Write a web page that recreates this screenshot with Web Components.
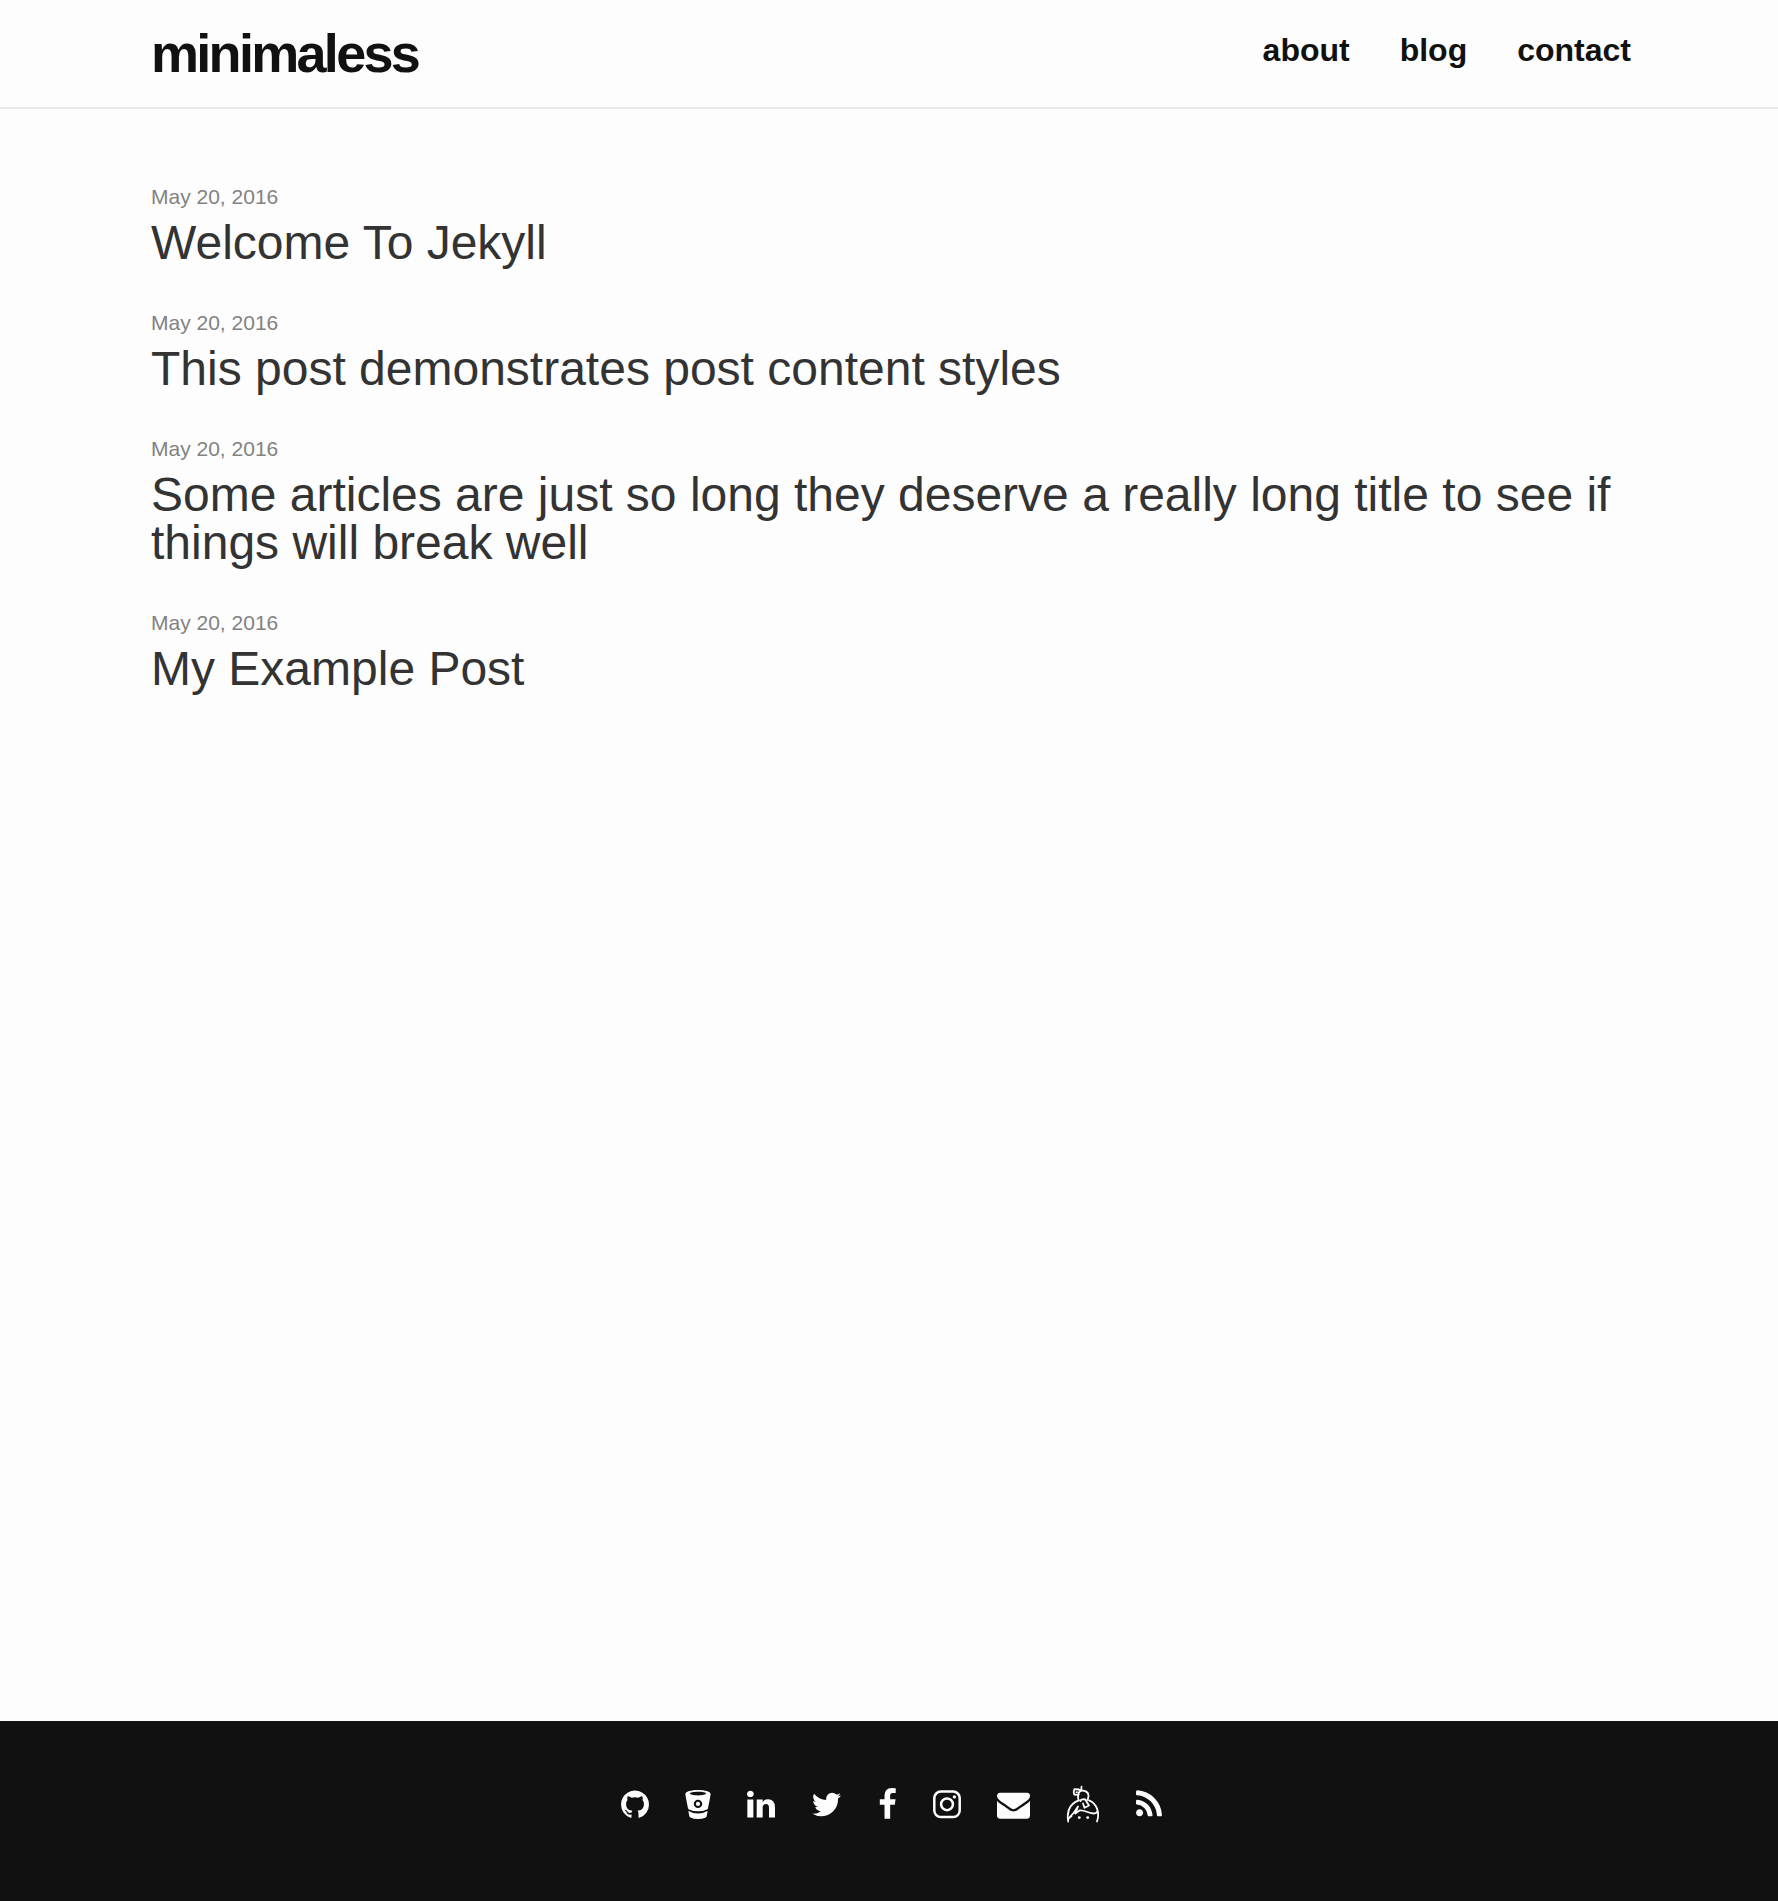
<!DOCTYPE html>
<html lang="en">
<head>
<meta charset="utf-8">
<meta name="viewport" content="width=device-width, initial-scale=1">
<title>minimaless</title>
<style>
  body { margin: 0; background: #fdfdfd; font-family: "Liberation Sans", Arial, sans-serif; color: #333; }
</style>
</head>
<body>
<site-page>
  <site-header slot="header">
    <site-logo href="#home">minimaless</site-logo>
    <nav-link slot="nav" href="#about">about</nav-link>
    <nav-link slot="nav" href="#blog">blog</nav-link>
    <nav-link slot="nav" href="#contact">contact</nav-link>
  </site-header>
  <post-item date="May 20, 2016" href="#welcome">Welcome To Jekyll</post-item>
  <post-item date="May 20, 2016" href="#styles">This post demonstrates post content styles</post-item>
  <post-item date="May 20, 2016" href="#long">Some articles are just so long they deserve a really long title to see if things will break well</post-item>
  <post-item date="May 20, 2016" href="#example">My Example Post</post-item>
  <site-footer slot="footer">
    <social-link name="github"></social-link>
    <social-link name="bitbucket"></social-link>
    <social-link name="linkedin"></social-link>
    <social-link name="twitter"></social-link>
    <social-link name="facebook"></social-link>
    <social-link name="instagram"></social-link>
    <social-link name="email"></social-link>
    <social-link name="keybase"></social-link>
    <social-link name="rss"></social-link>
  </site-footer>
</site-page>
<script>
class Base extends HTMLElement {
  connectedCallback() {
    if (!this.shadowRoot) this.attachShadow({ mode: 'open' }).innerHTML = this.render();
  }
}

customElements.define('site-page', class extends Base {
  render() {
    return `<style>
      :host { display: flex; flex-direction: column; min-height: 100vh; }
      main { flex: 1; display: flex; flex-direction: column; gap: 44px; padding: 76px 147px 64px 151px; }
    </style>
    <slot name="header"></slot><main><slot></slot></main><slot name="footer"></slot>`;
  }
});

customElements.define('site-header', class extends Base {
  render() {
    return `<style>
      :host { display: block; border-bottom: 2px solid #e8e8e8; }
      header { display: flex; justify-content: space-between; align-items: flex-start; padding: 23px 147px 24px 151px; }
      nav { display: flex; gap: 50px; padding-top: 9px; }
    </style>
    <header><slot></slot><nav><slot name="nav"></slot></nav></header>`;
  }
});

customElements.define('site-logo', class extends Base {
  render() {
    return `<style>
      :host { display: block; }
      a { display: block; color: #111; font-size: 54px; line-height: 60px; font-weight: 700; letter-spacing: -0.05em; text-decoration: none; }
    </style>
    <a href="${this.getAttribute('href')}"><slot></slot></a>`;
  }
});

customElements.define('nav-link', class extends Base {
  render() {
    return `<style>
      :host { display: block; }
      a { display: block; color: #111; font-size: 32px; line-height: 36px; font-weight: 700; text-decoration: none; }
    </style>
    <a href="${this.getAttribute('href')}"><slot></slot></a>`;
  }
});

customElements.define('post-item', class extends Base {
  render() {
    return `<style>
      :host { display: block; }
      time { display: block; color: #828282; font-size: 21px; line-height: 24px; margin-bottom: 10px; }
      h2 { margin: 0; font-size: 48px; line-height: 48px; font-weight: 400; }
      a { color: #333; text-decoration: none; }
    </style>
    <article><time datetime="2016-05-20">${this.getAttribute('date')}</time>
    <h2><a href="${this.getAttribute('href')}"><slot></slot></a></h2></article>`;
  }
});

customElements.define('site-footer', class extends Base {
  render() {
    return `<style>
      :host { display: block; background: #111; }
      footer { display: flex; justify-content: center; align-items: center; gap: 36px; padding: 67px 147px 80px 151px; }
    </style>
    <footer><slot></slot></footer>`;
  }
});

// Each icon: width in pixels, viewBox, shapes. All are 33px tall.
const ICONS = {
  github: [28, '128 0 1536 1792', '<path d="M1664 896q0 251-146.5 451.5t-378.5 277.5q-27 5-39.5-7t-12.5-30v-211q0-97-52-142 57-6 102.5-18t94-39 81-66.5 53-105 20.5-150.5q0-121-79-206 37-91-8-204-28-9-81 11t-92 44l-38 24q-93-26-192-26t-192 26q-16-11-42.5-27t-83.5-38.5-86-13.5q-44 113-7 204-79 85-79 206 0 85 20.5 150t52.5 105 80.5 67 94 39 102.5 18q-40 36-49 103-21 10-45 15t-57 5-65.5-21.5-55.5-62.5q-19-32-48.5-52t-49.5-24l-20-3q-21 0-29 4.5t-5 11.5 9 14 13 12l7 5q22 10 43.5 38t31.5 51l10 23q13 38 44 61.5t67 30 69.5 7 55.5-3.5l23-4q0 38 .5 89t.5 54q0 18-13 30t-40 7q-232-77-378.5-277.5t-146.5-451.5q0-209 103-385.5t279.5-279.5 385.5-103 385.5 103 279.5 279.5 103 385.5z"/>'],
  bitbucket: [26, '0 0 26 33', '<path fill-rule="evenodd" d="M13 2C6 2 .4 3.600.4 6C.4 7.500 2.500 17.500 3 20.200Q3.200 21 4 21.400Q8 23.300 13 23.300T22 21.400Q22.800 21 23 20.200C23.500 17.500 25.600 7.500 25.600 6C25.600 3.600 20 2 13 2ZM13 3.800C17.500 3.800 21 4.500 21 5.600S17.500 7.400 13 7.400S5 6.700 5 5.600S8.500 3.800 13 3.800ZM13 11.700A4.200 4.200 0 1 1 13 20.100A4.200 4.200 0 1 1 13 11.700Z"/><circle cx="13" cy="15.900" r="2.100"/><path d="M3.700 22.900Q8 25.400 13 25.400T22.300 22.900Q22.700 23 22.600 23.400L21.700 28Q21.500 29 20.600 29.500Q17.500 31 13 31T5.400 29.500Q4.500 29 4.300 28L3.400 23.400Q3.400 23 3.700 22.900Z"/>'],
  linkedin: [28, '128 0 1536 1792', '<path d="M477 625v991h-330v-991h330zm21-306q1 73-50.500 122t-135.500 49h-2q-82 0-132-49t-50-122q0-74 51.500-122.500t134.500-48.500 133 48.500 51 122.500zm1166 729v568h-329v-530q0-105-40.500-164.500t-126.500-59.500q-63 0-105.500 34.500t-63.500 85.500q-11 30-11 81v553h-329q2-399 2-647t-1-296l-1-48h329v144h-2q20-32 41-56t56.500-52 87-43.500 114.500-15.500q171 0 275 113.500t104 332.500z"/>'],
  twitter: [31, '64 0 1664 1792', '<path d="M1684 408q-67 98-162 167 1 14 1 42 0 130-38 259.500t-115.500 248.500-184.500 210.500-258 146-323 54.500q-271 0-496-145 35 4 78 4 225 0 401-138-105-2-188-64.500t-114-159.500q33 5 61 5 43 0 85-11-112-23-185.500-111.500t-73.500-205.500v-4q68 38 146 41-66-44-105-115t-39-154q0-88 44-163 121 149 294.500 238.500t371.500 99.500q-8-38-8-74 0-134 94.500-228.500t228.500-94.500q140 0 236 102 109-21 205-78-37 115-142 178 93-10 186-50z"/>'],
  facebook: [19, '384 0 1024 1792', '<path d="M1343 12v264h-157q-86 0-116 36t-30 108v189h293l-39 296h-254v759h-306v-759h-255v-296h255v-218q0-186 104-288.500t277-102.500q147 0 228 12z"/>'],
  instagram: [28, '0 0 28 33', '<rect x="1.300" y="3.600" width="25.400" height="25.400" rx="6.500" fill="none" stroke="#fdfdfd" stroke-width="2.500"/><circle cx="14" cy="16.300" r="5.900" fill="none" stroke="#fdfdfd" stroke-width="2.500"/><circle cx="21.400" cy="8.900" r="1.700"/>'],
  email: [33, '0 0 1792 1792', '<path d="M1792 710v794q0 66-47 113t-113 47h-1472q-66 0-113-47t-47-113v-794q44 49 101 87 362 246 497 345 57 42 92.500 65.500t94.500 48 110 24.500h2q51 0 110-24.500t94.500-48 92.500-65.500q170-123 498-345 57-39 100-87zm0-294q0 79-49 151t-122 123q-376 261-468 325-10 7-42.500 30.500t-54 38-52 32.500-57.500 27-50 9h-2q-23 0-50-9t-57.500-27-52-32.500-54-38-42.500-30.500q-91-64-262-182.500t-205-142.500q-62-42-117-115.500t-55-136.500q0-78 41.500-130t118.500-52h1472q65 0 112.500 47t47.500 113z"/>'],
  keybase: [34, '0 0 34 33', '<g fill="none" stroke="#fdfdfd" stroke-width="1.800" stroke-linejoin="round" stroke-linecap="round"><path d="M2.200 33.500C1 27 1.500 16 13 12.300M23 12.300C31 15.500 34 25 31 33.500"/><path d="M12.600 11.800C11.500 9.500 12 5 14 3.300C18 1.300 22.500 4 22.500 7.500Q22.500 10 21.300 12M12.500 1.500L15.300 2.300L15.500-1.300"/><path d="M12.600 6.800L8.200 6.500Q7.200 4 8.400 1.200L12.500 1.500"/><path d="M14.500 13Q14.800 11.300 16.700 11.400L19 11.200L23 17.500L18.500 19.800L17 15.500"/><path d="M2 31L8 24.500L12 18.500L9.300 25.500L13.500 22.500C19 22 23 25.500 28 25.500Q30.500 25.500 31.200 23.500M2 31L5.500 28"/><path d="M10.600 4.200h.4"/></g><circle cx="13.300" cy="29.600" r="1.400"/><circle cx="21.700" cy="29.600" r="1.400"/>'],
  rss: [26, '192 0 1408 1792', '<path d="M576 1344q0 80-56 136t-136 56-136-56-56-136 56-136 136-56 136 56 56 136zm512 123q2 28-17 48-18 21-47 21h-135q-25 0-43-16.500t-20-41.500q-22-229-184.500-391.500t-391.500-184.500q-25-2-41.500-20t-16.500-43v-135q0-29 21-47 17-17 43-17h5q160 13 306 80.500t259 181.500q114 113 181.500 259t80.500 306zm512 2q2 27-18 47-18 20-46 20h-143q-26 0-44.500-17.500t-19.500-42.500q-12-215-101-408.500t-231.500-336-336-231.500-408.500-102q-25-1-42.500-19.500t-17.500-43.500v-143q0-28 20-46 18-18 44-18h3q262 13 501.500 120t425.500 294q187 186 294 425.500t120 501.500z"/>']
};

customElements.define('social-link', class extends Base {
  render() {
    const name = this.getAttribute('name');
    const [width, box, shapes] = ICONS[name];
    return `<style>
      :host { display: block; }
      a { display: block; }
      svg { display: block; fill: #fdfdfd; overflow: visible; }
    </style>
    <a href="#${name}" aria-label="${name}"><svg width="${width}" height="33" viewBox="${box}" aria-hidden="true">${shapes}</svg></a>`;
  }
});
</script>
</body>
</html>
